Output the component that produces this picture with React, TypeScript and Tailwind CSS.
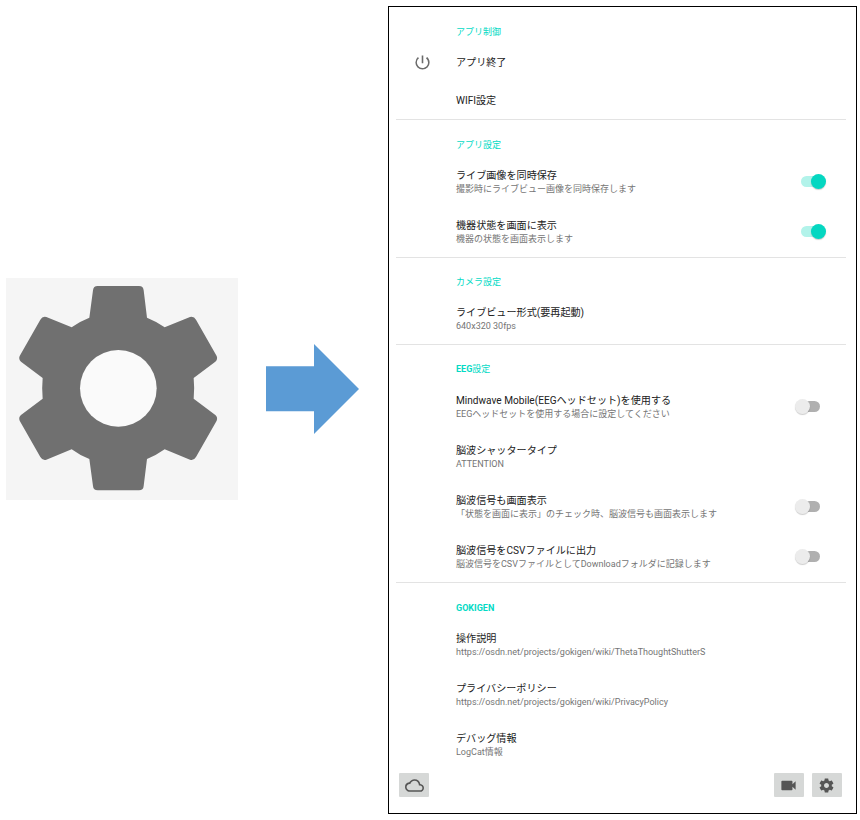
import type { ReactNode } from 'react';
import { MdCloudQueue, MdPowerSettingsNew, MdVideocam } from 'react-icons/md';

type Item = { title: string; summary?: string; on?: boolean; icon?: ReactNode };
type Section = { latin?: string; header: string; items: Item[] };

const control: Section = {
  header: 'アプリ制御',
  items: [
    { title: 'アプリ終了', icon: <MdPowerSettingsNew className="size-[19px] text-[#6b6b6b]" /> },
    { title: 'WIFI設定' },
  ],
};

const sections: Section[] = [
  {
    header: 'アプリ設定',
    items: [
      { title: 'ライブ画像を同時保存', summary: '撮影時にライブビュー画像を同時保存します', on: true },
      { title: '機器状態を画面に表示', summary: '機器の状態を画面表示します', on: true },
    ],
  },
  {
    header: 'カメラ設定',
    items: [{ title: 'ライブビュー形式(要再起動)', summary: '640x320 30fps' }],
  },
  {
    latin: 'EEG',
    header: '設定',
    items: [
      {
        title: 'Mindwave Mobile(EEGヘッドセット)を使用する',
        summary: 'EEGヘッドセットを使用する場合に設定してください',
        on: false,
      },
      { title: '脳波シャッタータイプ', summary: 'ATTENTION' },
      {
        title: '脳波信号も画面表示',
        summary: '「状態を画面に表示」のチェック時、脳波信号も画面表示します',
        on: false,
      },
      {
        title: '脳波信号をCSVファイルに出力',
        summary: '脳波信号をCSVファイルとしてDownloadフォルダに記録します',
        on: false,
      },
    ],
  },
  {
    latin: 'GOKIGEN',
    header: '',
    items: [
      { title: '操作説明', summary: 'https://osdn.net/projects/gokigen/wiki/ThetaThoughtShutterS' },
      { title: 'プライバシーポリシー', summary: 'https://osdn.net/projects/gokigen/wiki/PrivacyPolicy' },
      { title: 'デバッグ情報', summary: 'LogCat情報' },
    ],
  },
];

function LargeGear() {
  return (
    <svg className="h-[222px] w-[232px] bg-[#f5f5f5]" viewBox="18 24 696 666">
      <path
        fill="#707070"
        d="M293 48H417Q430 48 431 61L441 143Q469 154 494 172L570 141Q582 138 588 149L650 258Q654 268 646 275L581 324Q584 355 581 386L646 435Q654 442 650 452L588 561Q582 572 570 569L494 538Q469 556 441 567L431 648Q430 661 417 661H293Q280 661 279 648L268 567Q239 556 215 538L139 569Q127 572 121 561L59 452Q55 442 63 435L128 386Q125 355 128 324L63 275Q55 268 59 258L121 149Q127 138 139 141L215 172Q239 154 268 143L279 61Q280 48 293 48Z"
      />
      <circle cx="355" cy="355" r="115" fill="#fafafa" />
    </svg>
  );
}

function SettingsIcon() {
  return (
    <svg className="size-[17px]" viewBox="0 0 24 24" fill="currentColor">
      <path d="M19.43 12.98c.04-.32.07-.64.07-.98s-.03-.66-.07-.98l2.11-1.65c.19-.15.24-.42.12-.64l-2-3.46c-.12-.22-.39-.3-.61-.22l-2.49 1c-.52-.4-1.08-.73-1.69-.98l-.38-2.65C14.46 2.18 14.25 2 14 2h-4c-.25 0-.46.18-.49.42l-.38 2.65c-.61.25-1.17.59-1.69.98l-2.49-1c-.23-.09-.49 0-.61.22l-2 3.46c-.13.22-.07.49.12.64l2.11 1.65c-.04.32-.07.65-.07.98s.03.66.07.98l-2.11 1.65c-.19.15-.24.42-.12.64l2 3.46c.12.22.39.3.61.22l2.49-1c.52.4 1.08.73 1.69.98l.38 2.65c.03.24.24.42.49.42h4c.25 0 .46-.18.49-.42l.38-2.65c.61-.25 1.17-.59 1.69-.98l2.49 1c.23.09.49 0 .61-.22l2-3.46c.12-.22.07-.49-.12-.64l-2.11-1.65zM12 15.5c-1.93 0-3.5-1.57-3.5-3.5s1.57-3.5 3.5-3.5 3.5 1.57 3.5 3.5-1.57 3.5-3.5 3.5z" />
    </svg>
  );
}

function Toggle({ on }: { on: boolean }) {
  return (
    <div className="mr-[20px] grid w-[31px] shrink-0 items-center">
      <div
        className={`col-start-1 row-start-1 mx-auto h-[11px] w-[19px] rounded-full ${on ? 'bg-[#b2f3ea]' : 'bg-[#b0b0b0]'}`}
      />
      <div
        className={`col-start-1 row-start-1 size-[15px] rounded-full shadow-[0_1px_1px_rgba(0,0,0,0.2)] ${on ? 'justify-self-end bg-[#04d7c1]' : 'justify-self-start bg-[#ececec]'}`}
      />
    </div>
  );
}

function Header({ section }: { section: Section }) {
  return (
    <h2 className="pl-[60px] text-[9px] leading-[12px] text-[#03dac5]">
      {section.latin && <span className="font-bold">{section.latin}</span>}
      {section.header}
    </h2>
  );
}

function Row({ item, compact }: { item: Item; compact?: boolean }) {
  return (
    <div className={`flex items-center ${compact ? 'h-[38px]' : 'h-[50.3px]'}`}>
      <div className="flex w-[60px] shrink-0 pl-[17px]">{item.icon}</div>
      <div className="flex-1 pt-[2px] whitespace-nowrap">
        <div className="text-[10.1px] leading-[14px] text-[#212121]">{item.title}</div>
        {item.summary && <div className="text-[9px] leading-[13px] text-[#757575]">{item.summary}</div>}
      </div>
      {item.on !== undefined && <Toggle on={item.on} />}
    </div>
  );
}

function ToolButton({ children }: { children: ReactNode }) {
  return (
    <button className="flex h-[24px] w-[30px] items-center justify-center rounded-[1px] bg-[#d6d8d7] text-[#555]">
      {children}
    </button>
  );
}

export default function App() {
  return (
    <div className="flex h-[820px] w-[860px] overflow-hidden bg-white pt-[6px] pl-[6px] font-[Roboto,'Noto_Sans_CJK_JP',sans-serif]">
      <div className="flex w-[382px] shrink-0 items-center gap-[28px] pb-[48px]">
        <LargeGear />
        <svg className="h-[90px] w-[93px]" viewBox="0 0 93 90" fill="#5b9bd5">
          <path d="M0 22.3H48V0L93 45L48 90V67.3H0Z" />
        </svg>
      </div>
      <main className="flex h-[808px] w-[469px] shrink-0 flex-col border border-black bg-white">
        <div className="mr-[10px] ml-[7px]">
          <section className="h-[112px] pt-[19px]">
            <Header section={control} />
            <div className="pt-[5px]">
              {control.items.map((item) => (
                <Row key={item.title} item={item} compact />
              ))}
            </div>
          </section>
          {sections.map((section) => (
            <section key={section.items[0].title} className="border-t border-[#e3e3e3]">
              <div className="h-[36px] pt-[18.5px]">
                <Header section={section} />
              </div>
              {section.items.map((item) => (
                <Row key={item.title} item={item} />
              ))}
            </section>
          ))}
        </div>
        <footer className="mt-auto flex gap-[8px] pr-[14.5px] pb-[16px] pl-[10px]">
          <ToolButton>
            <MdCloudQueue className="size-[19px]" />
          </ToolButton>
          <div className="flex-1" />
          <ToolButton>
            <MdVideocam className="size-[19px]" />
          </ToolButton>
          <ToolButton>
            <SettingsIcon />
          </ToolButton>
        </footer>
      </main>
    </div>
  );
}
